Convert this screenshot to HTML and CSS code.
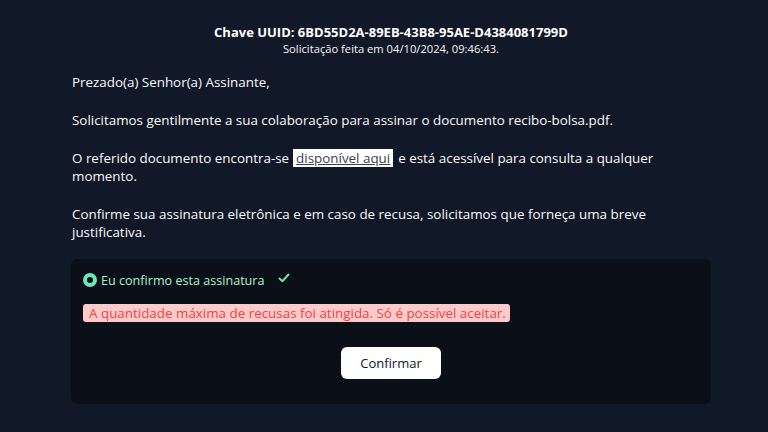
FILE: index.html
```html
<!DOCTYPE html>
<html lang="pt-BR">
<head>
<meta charset="utf-8">
<link rel="stylesheet" href="styles.css">
</head>
<body>
<main class="page">
  <header class="head">
    <div class="uuid">Chave UUID: 6BD55D2A-89EB-43B8-95AE-D4384081799D</div>
    <div class="date">Solicitação feita em 04/10/2024, 09:46:43.</div>
  </header>
  <section class="body">
    <p>Prezado(a) Senhor(a) Assinante,</p>
    <p>Solicitamos gentilmente a sua colaboração para assinar o documento recibo-bolsa.pdf.</p>
    <p><span>O referido documento encontra-se</span><a class="link" href="#">disponível aqui</a><span>e está acessível para consulta a qualquer momento.</span></p>
    <p>Confirme sua assinatura eletrônica e em caso de recusa, solicitamos que forneça uma breve justificativa.</p>
  </section>
  <section class="card">
    <label class="option">
      <span class="radio"></span>
      <span class="opt-text">Eu confirmo esta assinatura</span>
      <svg class="check" width="12" height="10" viewBox="0 0 12 10"><path d="M1.5 5.5 L4.5 8.2 L10.5 1.5" fill="none" stroke="#6ee7b7" stroke-width="2" stroke-linecap="round" stroke-linejoin="round"/></svg>
    </label>
    <div class="error">A quantidade máxima de recusas foi atingida. Só é possível aceitar.</div>
    <div class="actions">
      <button class="btn">Confirmar</button>
    </div>
  </section>
</main>
</body>
</html>
```
FILE: styles.css
```css
html, body {
  margin: 0;
  padding: 0;
  background: #111827;
}
body {
  font-family: "Open Sans", "Noto Sans", sans-serif;
  color: #f9fafb;
  width: 768px;
  height: 432px;
  overflow: hidden;
}
.page {
  padding: 24px 0 0 71px;
  width: 640px;
}
.head {
  text-align: center;
}
.uuid {
  font-weight: 700;
  font-size: 13px;
  line-height: 17px;
  color: #ffffff;
}
.date {
  font-size: 11.2px;
  line-height: 15px;
  color: #f3f4f6;
}
.body {
  padding-left: 1px;
  padding-top: 17px;
  max-width: 605px;
}
.body p {
  margin: 0 0 20px;
  font-size: 13.4px;
  line-height: 18px;
}
.body p:last-child {
  margin-bottom: 18px;
}
.link {
  display: inline-block;
  background: #ffffff;
  color: #374151;
  text-decoration: underline;
  line-height: 16px;
  padding: 1px 3px;
  margin: 0 5px 0 4px;
  vertical-align: top;
}
.card {
  background: #0b0f17;
  border-radius: 6px;
  height: 145px;
  padding: 12px 12px 0;
  box-sizing: border-box;
}
.option {
  display: flex;
  align-items: center;
  gap: 3px;
  height: 18px;
  color: #a7f3d0;
  font-size: 12.6px;
}
.radio {
  box-sizing: border-box;
  flex: 0 0 14px;
  width: 14px;
  height: 14px;
  border-radius: 50%;
  border: 4.5px solid #6ee7b7;
  background: #0b0f17;
  margin-right: 1px;
}
.check {
  margin-left: 10px;
  margin-top: -4px;
}
.error {
  margin-top: 15px;
  display: inline-block;
  background: #fecaca;
  color: #ef4444;
  font-size: 13.4px;
  line-height: 18px;
  padding: 0 4px 0 6px;
  border-radius: 3px;
}
.actions {
  display: flex;
  justify-content: center;
  margin-top: 24px;
}
.btn {
  font-family: inherit;
  background: #ffffff;
  color: #111827;
  border: none;
  border-radius: 6px;
  width: 100px;
  height: 32px;
  font-size: 13px;
  font-weight: 500;
}
```
